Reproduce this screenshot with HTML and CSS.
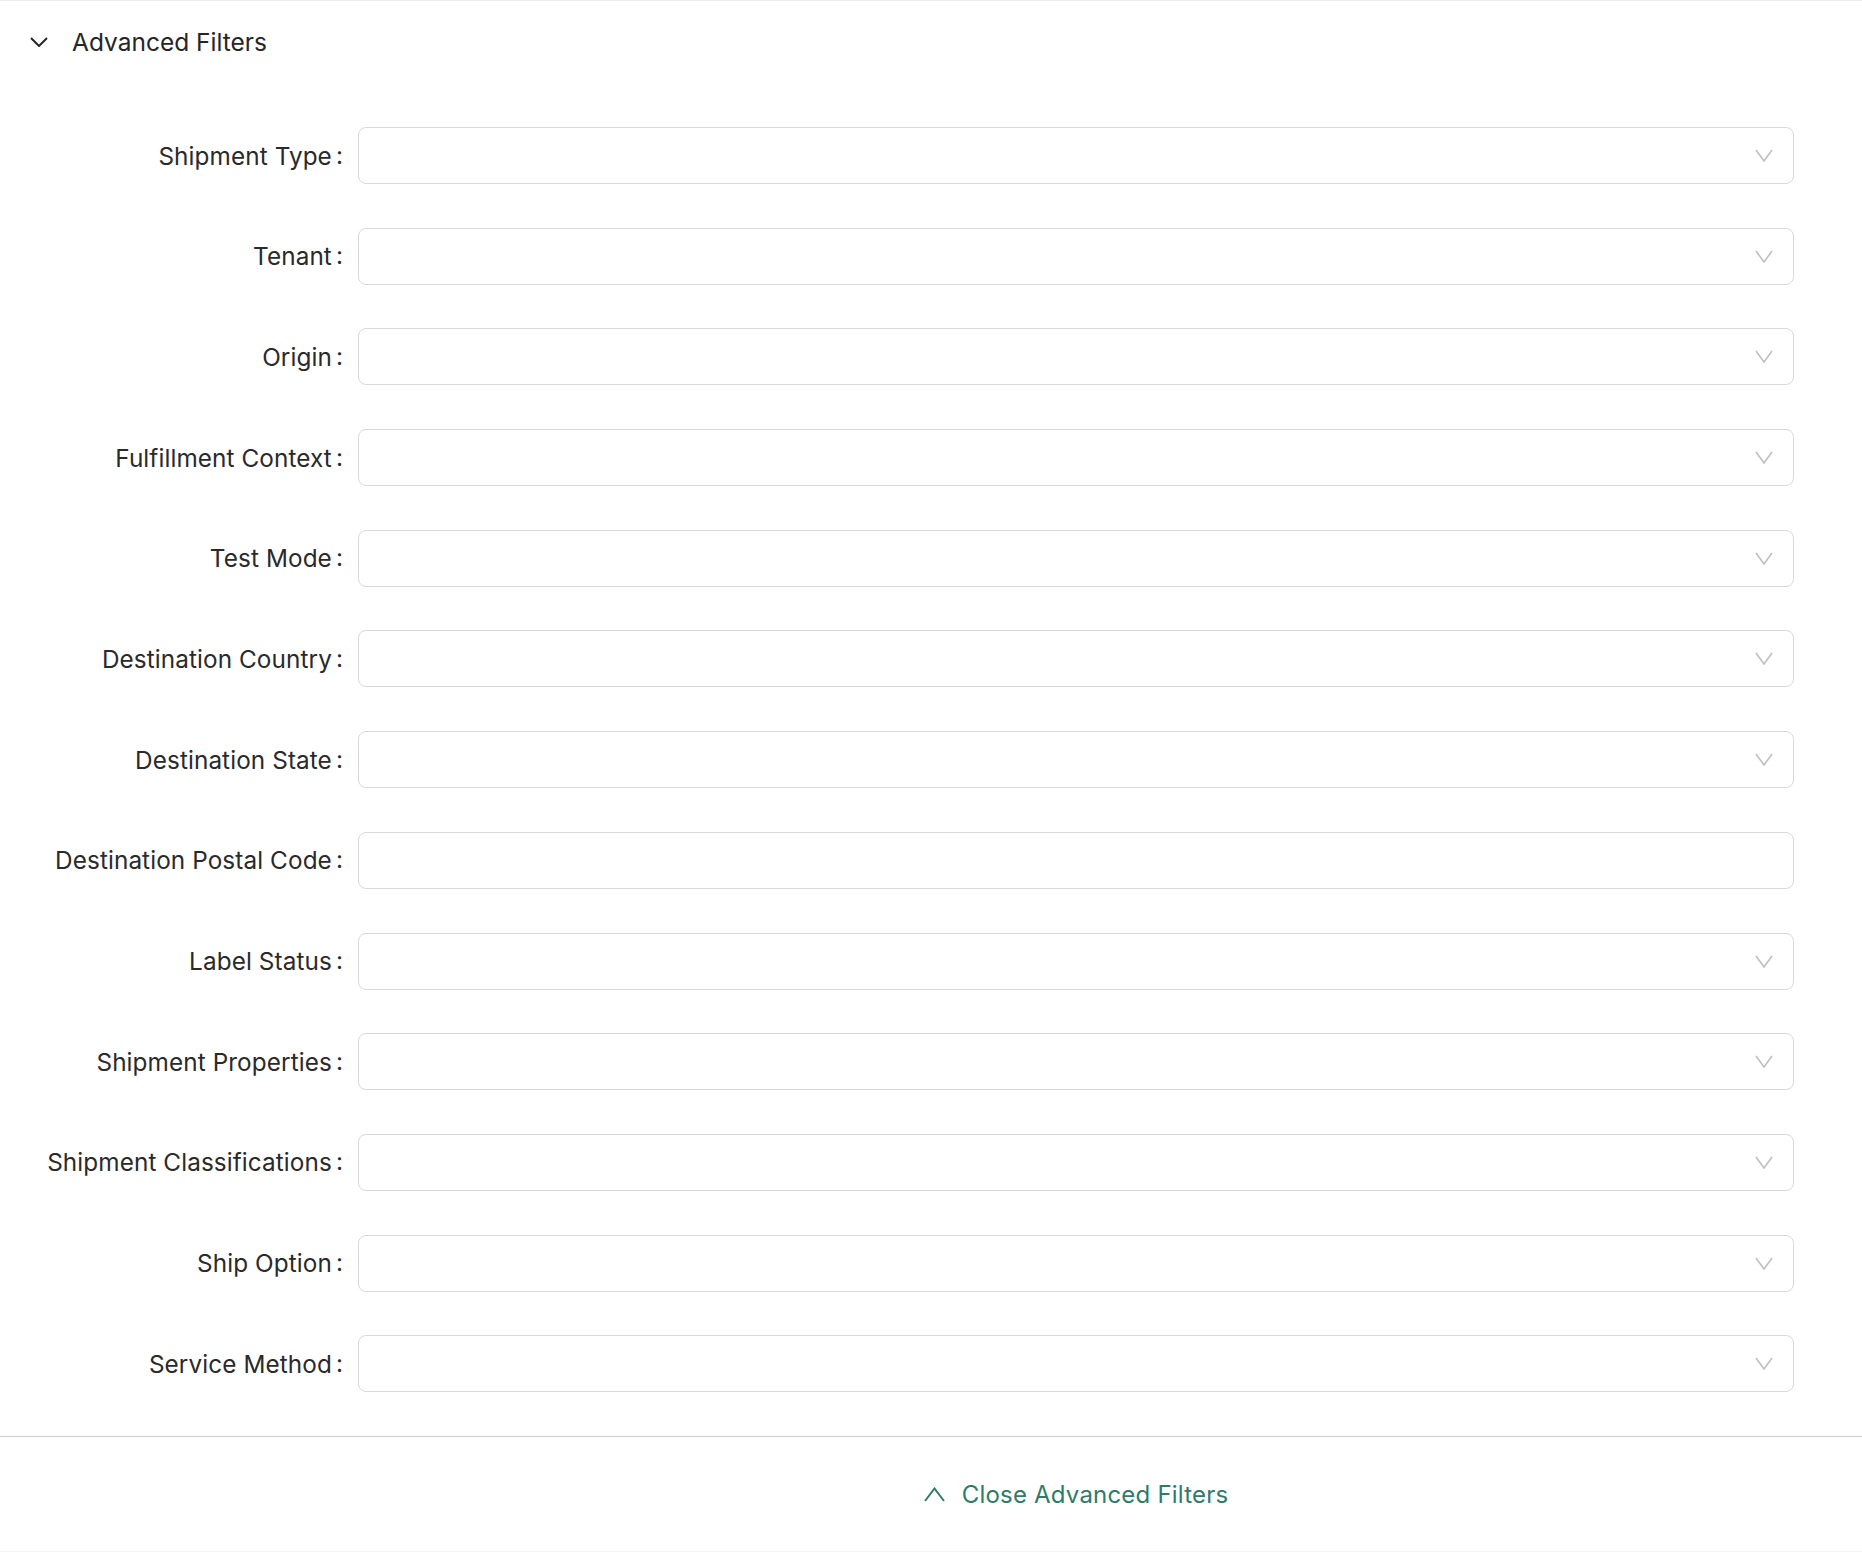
FILE: index.html
```html
<!DOCTYPE html>
<html lang="en">
  <head>
    <meta charset="UTF-8" />
    <meta name="viewport" content="width=device-width, initial-scale=1.0" />
    <title>Advanced Filters</title>
    <link rel="stylesheet" href="styles.css">
  </head>
  <body>
    <section class="filters">
      <!-- Panel header -->
      <div class="filters-header">
        <svg class="header-arrow" viewBox="0 0 18 10" width="18" height="10">
          <polyline points="1,1 9,9 17,1" />
        </svg>
        <span class="header-title">Advanced Filters</span>
      </div>

      <!-- Filter rows -->
      <form class="filters-form">
        <div class="form-row">
          <label class="form-label">Shipment Type<span class="colon">:</span></label>
          <div class="select"><svg class="select-arrow" viewBox="0 0 18 13"><polyline points="1,1 9,12 17,1" /></svg></div>
        </div>
        <div class="form-row">
          <label class="form-label">Tenant<span class="colon">:</span></label>
          <div class="select"><svg class="select-arrow" viewBox="0 0 18 13"><polyline points="1,1 9,12 17,1" /></svg></div>
        </div>
        <div class="form-row">
          <label class="form-label">Origin<span class="colon">:</span></label>
          <div class="select"><svg class="select-arrow" viewBox="0 0 18 13"><polyline points="1,1 9,12 17,1" /></svg></div>
        </div>
        <div class="form-row">
          <label class="form-label">Fulfillment Context<span class="colon">:</span></label>
          <div class="select"><svg class="select-arrow" viewBox="0 0 18 13"><polyline points="1,1 9,12 17,1" /></svg></div>
        </div>
        <div class="form-row">
          <label class="form-label">Test Mode<span class="colon">:</span></label>
          <div class="select"><svg class="select-arrow" viewBox="0 0 18 13"><polyline points="1,1 9,12 17,1" /></svg></div>
        </div>
        <div class="form-row">
          <label class="form-label">Destination Country<span class="colon">:</span></label>
          <div class="select"><svg class="select-arrow" viewBox="0 0 18 13"><polyline points="1,1 9,12 17,1" /></svg></div>
        </div>
        <div class="form-row">
          <label class="form-label">Destination State<span class="colon">:</span></label>
          <div class="select"><svg class="select-arrow" viewBox="0 0 18 13"><polyline points="1,1 9,12 17,1" /></svg></div>
        </div>
        <div class="form-row">
          <label class="form-label">Destination Postal Code<span class="colon">:</span></label>
          <input class="text-input" type="text" />
        </div>
        <div class="form-row">
          <label class="form-label">Label Status<span class="colon">:</span></label>
          <div class="select"><svg class="select-arrow" viewBox="0 0 18 13"><polyline points="1,1 9,12 17,1" /></svg></div>
        </div>
        <div class="form-row">
          <label class="form-label">Shipment Properties<span class="colon">:</span></label>
          <div class="select"><svg class="select-arrow" viewBox="0 0 18 13"><polyline points="1,1 9,12 17,1" /></svg></div>
        </div>
        <div class="form-row">
          <label class="form-label">Shipment Classifications<span class="colon">:</span></label>
          <div class="select"><svg class="select-arrow" viewBox="0 0 18 13"><polyline points="1,1 9,12 17,1" /></svg></div>
        </div>
        <div class="form-row">
          <label class="form-label">Ship Option<span class="colon">:</span></label>
          <div class="select"><svg class="select-arrow" viewBox="0 0 18 13"><polyline points="1,1 9,12 17,1" /></svg></div>
        </div>
        <div class="form-row">
          <label class="form-label">Service Method<span class="colon">:</span></label>
          <div class="select"><svg class="select-arrow" viewBox="0 0 18 13"><polyline points="1,1 9,12 17,1" /></svg></div>
        </div>
      </form>

      <!-- Footer -->
      <div class="filters-footer">
        <div class="footer-spacer"></div>
        <button class="close-btn" type="button">
          <svg class="close-arrow" viewBox="0 0 21 15" width="21" height="15">
            <polyline points="1,14 10.5,1.5 20,14" />
          </svg>
          Close Advanced Filters
        </button>
      </div>
    </section>
  </body>
</html>
```

FILE: styles.css
```css
* {
  margin: 0;
  padding: 0;
  box-sizing: border-box;
}

body {
  font-family: "Inter", "Noto Sans", sans-serif;
  color: #262626;
  background: #fff;
}

.filters {
  border-top: 1px solid #ececec;
  border-bottom: 1px solid #f5f5f5;
  width: 100%;
}

/* Header */
.filters-header {
  display: flex;
  align-items: center;
  height: 83px;
  padding-left: 30px;
  padding-bottom: 1px;
}

.header-arrow {
  fill: none;
  stroke: #262626;
  stroke-width: 2;
  margin-right: 24px;
}

.header-title {
  font-size: 24.5px;
}

/* Rows */
.filters-form {
  display: flex;
  flex-direction: column;
  gap: 43.7px;
  padding-top: 43px;
  padding-right: 68px;
}

.form-row {
  display: grid;
  grid-template-columns: 358px 1fr;
  align-items: center;
  height: 57px;
}

.form-label {
  display: flex;
  justify-content: flex-end;
  align-items: center;
  font-size: 24.3px;
  letter-spacing: 0.1px;
  color: #2a2a2a;
  white-space: nowrap;
}

.colon {
  margin-left: 4px;
  margin-right: 15px;
  position: relative;
  top: -1px;
}

.select,
.text-input {
  height: 57px;
  border: 1px solid #d9d9d9;
  border-radius: 8px;
  background: #fff;
}

.select {
  display: flex;
  justify-content: flex-end;
  align-items: center;
  padding-right: 20px;
}

.text-input {
  width: 100%;
  font: inherit;
  outline: none;
}

.select-arrow {
  width: 18px;
  height: 13px;
  fill: none;
  stroke: #bfbfbf;
  stroke-width: 1.6;
}

/* Footer */
.filters-footer {
  margin-top: 44px;
  border-top: 1px solid #cfcfcf;
  display: grid;
  grid-template-columns: 358px 1fr;
  padding-right: 68px;
  height: 115px;
}

.close-btn {
  display: flex;
  align-items: center;
  justify-content: center;
  gap: 17px;
  border: none;
  background: none;
  font-family: inherit;
  font-size: 24px;
  letter-spacing: 0.2px;
  color: #2e7b69;
  cursor: pointer;
  height: 114px;
}

.close-arrow {
  fill: none;
  stroke: #2e7b69;
  stroke-width: 2;
}
```
